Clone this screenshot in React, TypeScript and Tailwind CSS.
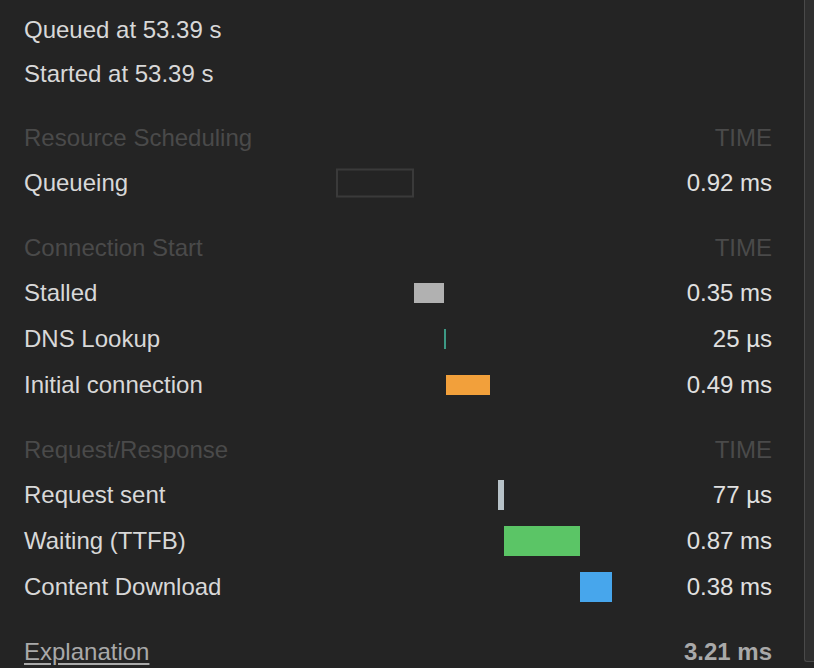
import React from "react";

type Bar = { left: number; width: number; height: number; color: string; outline?: boolean };

interface Row {
  label: string;
  time: string;
  bar: Bar;
}

interface Section {
  title: string;
  rows: Row[];
}

const sections: Section[] = [
  {
    title: "Resource Scheduling",
    rows: [
      { label: "Queueing", time: "0.92 ms", bar: { left: 0, width: 78, height: 29, color: "#3a3a3a", outline: true } },
    ],
  },
  {
    title: "Connection Start",
    rows: [
      { label: "Stalled", time: "0.35 ms", bar: { left: 78, width: 30, height: 20, color: "#b1b1b1" } },
      { label: "DNS Lookup", time: "25 µs", bar: { left: 108, width: 2, height: 20, color: "#3d9985" } },
      { label: "Initial connection", time: "0.49 ms", bar: { left: 110, width: 44, height: 20, color: "#f2a03b" } },
    ],
  },
  {
    title: "Request/Response",
    rows: [
      { label: "Request sent", time: "77 µs", bar: { left: 162, width: 6, height: 30, color: "#b7c2c8" } },
      { label: "Waiting (TTFB)", time: "0.87 ms", bar: { left: 168, width: 76, height: 30, color: "#5bc566" } },
      { label: "Content Download", time: "0.38 ms", bar: { left: 244, width: 32, height: 30, color: "#47a6ec" } },
    ],
  },
];

function TimingRow({ row }: { row: Row }) {
  const { bar } = row;
  return (
    <div className="grid grid-cols-[312px_276px_1fr] items-center h-[46px] pb-[1px]">
      <div className="text-[#d8d8d8]">{row.label}</div>
      <div className="relative h-full">
        {/* bar offset/width come from the timing data */}
        <div
          className={
            bar.outline
              ? "absolute top-1/2 -translate-y-1/2 border-2 border-[#3a3a3a]"
              : "absolute top-1/2 -translate-y-1/2"
          }
          style={{
            left: bar.left,
            width: bar.width,
            height: bar.height,
            background: bar.outline ? "transparent" : bar.color,
          }}
        />
      </div>
      <div className="text-right text-[#e0e0e0]">{row.time}</div>
    </div>
  );
}

export default function App() {
  return (
    <div className="relative w-[814px] h-[668px] overflow-hidden bg-[#242424] font-['Liberation_Sans',Arial,sans-serif] text-[24px] leading-none">
      <div className="w-[804px] pl-[24px] pr-[32px] pt-[8px]">
        <div className="flex items-center h-[44px] text-[#d8d8d8]">Queued at 53.39 s</div>
        <div className="flex items-center h-[44px] text-[#d8d8d8]">Started at 53.39 s</div>

        {sections.map((s) => (
          <div key={s.title} className="mt-[18px]">
            <div className="flex items-center justify-between h-[46px] pt-[1px] text-[#4a4a4a]">
              <span>{s.title}</span>
              <span>TIME</span>
            </div>
            {s.rows.map((r) => (
              <TimingRow key={r.label} row={r} />
            ))}
          </div>
        ))}

        <div className="mt-[19px] flex items-center justify-between h-[46px]">
          <span className="text-[#a9a9a9] underline underline-offset-[3px]">Explanation</span>
          <span className="text-[#a9a9a9] font-bold">3.21 ms</span>
        </div>
      </div>

      {/* scrollbar thumb */}
      <div className="absolute right-0 top-0 w-[10px] h-[662px] bg-[#2f2f2f] border-l border-b border-[#4a4a4a] rounded-bl-[3px]" />
    </div>
  );
}
